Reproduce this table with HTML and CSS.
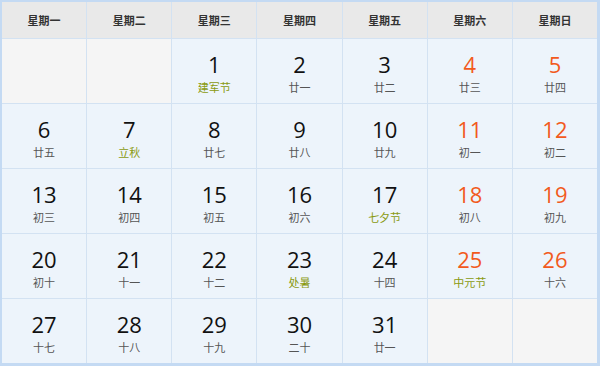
FILE: index.html
```html
<!DOCTYPE html>
<html lang="zh">
<head>
<meta charset="utf-8">
<link rel="stylesheet" href="styles.css">
</head>
<body>
<div class="cal">
  <div class="grid">
    <div class="hd">星期一</div><div class="hd">星期二</div><div class="hd">星期三</div><div class="hd">星期四</div><div class="hd">星期五</div><div class="hd">星期六</div><div class="hd">星期日</div>

    <div class="cell empty"></div>
    <div class="cell empty"></div>
    <div class="cell"><span class="n">1</span><span class="l fest">建军节</span></div>
    <div class="cell"><span class="n">2</span><span class="l">廿一</span></div>
    <div class="cell"><span class="n">3</span><span class="l">廿二</span></div>
    <div class="cell"><span class="n we">4</span><span class="l">廿三</span></div>
    <div class="cell"><span class="n we">5</span><span class="l">廿四</span></div>

    <div class="cell"><span class="n">6</span><span class="l">廿五</span></div>
    <div class="cell"><span class="n">7</span><span class="l fest">立秋</span></div>
    <div class="cell"><span class="n">8</span><span class="l">廿七</span></div>
    <div class="cell"><span class="n">9</span><span class="l">廿八</span></div>
    <div class="cell"><span class="n">10</span><span class="l">廿九</span></div>
    <div class="cell"><span class="n we">11</span><span class="l">初一</span></div>
    <div class="cell"><span class="n we">12</span><span class="l">初二</span></div>

    <div class="cell"><span class="n">13</span><span class="l">初三</span></div>
    <div class="cell"><span class="n">14</span><span class="l">初四</span></div>
    <div class="cell"><span class="n">15</span><span class="l">初五</span></div>
    <div class="cell"><span class="n">16</span><span class="l">初六</span></div>
    <div class="cell"><span class="n">17</span><span class="l fest">七夕节</span></div>
    <div class="cell"><span class="n we">18</span><span class="l">初八</span></div>
    <div class="cell"><span class="n we">19</span><span class="l">初九</span></div>

    <div class="cell"><span class="n">20</span><span class="l">初十</span></div>
    <div class="cell"><span class="n">21</span><span class="l">十一</span></div>
    <div class="cell"><span class="n">22</span><span class="l">十二</span></div>
    <div class="cell"><span class="n">23</span><span class="l fest">处暑</span></div>
    <div class="cell"><span class="n">24</span><span class="l">十四</span></div>
    <div class="cell"><span class="n we">25</span><span class="l fest">中元节</span></div>
    <div class="cell"><span class="n we">26</span><span class="l">十六</span></div>

    <div class="cell"><span class="n">27</span><span class="l">十七</span></div>
    <div class="cell"><span class="n">28</span><span class="l">十八</span></div>
    <div class="cell"><span class="n">29</span><span class="l">十九</span></div>
    <div class="cell"><span class="n">30</span><span class="l">二十</span></div>
    <div class="cell"><span class="n">31</span><span class="l">廿一</span></div>
    <div class="cell empty"></div>
    <div class="cell empty"></div>
  </div>
</div>
</body>
</html>
```
FILE: styles.css
```css
html, body {
  margin: 0;
  padding: 0;
  background: #fff;
}
.cal {
  width: 600px;
  height: 366px;
  box-sizing: border-box;
  padding: 2px 3px 3px 2px;
  background: #c4daf3;
}
.grid {
  display: grid;
  grid-template-columns: repeat(7, 1fr);
  grid-template-rows: 36px repeat(5, 1fr);
  gap: 1px;
  height: 100%;
  background: #d3e2f2;
}
.hd {
  background: #e9e9e9;
  display: flex;
  align-items: center;
  justify-content: center;
  font-family: "Noto Sans CJK SC", sans-serif;
  font-weight: bold;
  font-size: 11px;
  color: #333;
}
.cell {
  background: #edf4fb;
  display: flex;
  flex-direction: column;
  align-items: center;
  justify-content: center;
  padding-top: 1px;
}
.cell.empty {
  background: #f5f5f5;
}
.n {
  font-family: "Open Sans", "Liberation Sans", sans-serif;
  font-size: 22px;
  line-height: 30px;
  color: #111;
}
.n.we {
  color: #f25a1d;
}
.l {
  font-family: "Noto Sans CJK SC", sans-serif;
  font-size: 11px;
  line-height: 16px;
  color: #555;
}
.l.fest {
  color: #8a9a10;
}
```
